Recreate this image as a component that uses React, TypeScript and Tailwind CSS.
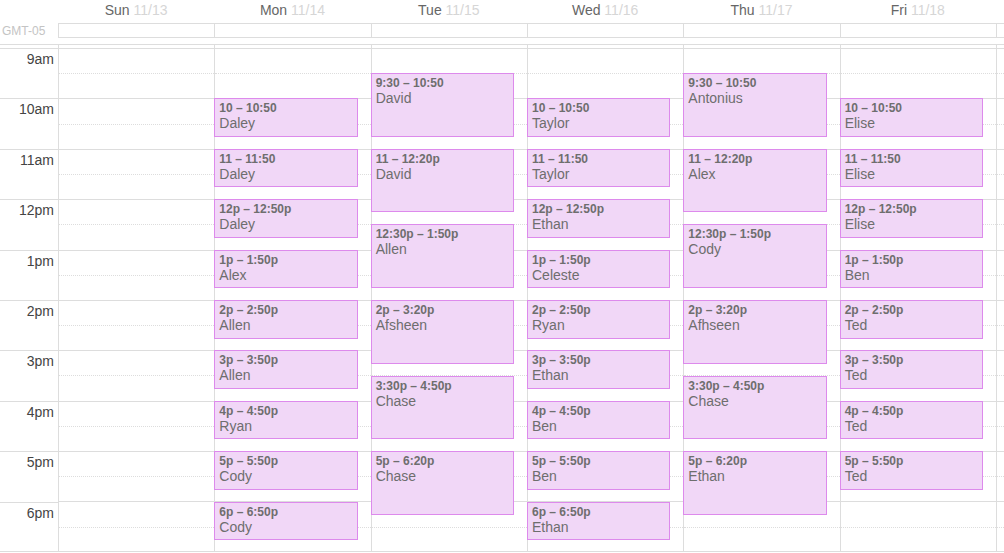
import React from "react";

type CalEvent = { start: number; end: number; time: string; who: string };

const DAYS = [
  { name: "Sun", date: "11/13" },
  { name: "Mon", date: "11/14" },
  { name: "Tue", date: "11/15" },
  { name: "Wed", date: "11/16" },
  { name: "Thu", date: "11/17" },
  { name: "Fri", date: "11/18" },
  { name: "", date: "" },
];

const HOURS = ["9am", "10am", "11am", "12pm", "1pm", "2pm", "3pm", "4pm", "5pm", "6pm"];

// minutes from midnight
const m = (h: number, min = 0) => h * 60 + min;

const ev = (s: number, e: number, time: string, who: string): CalEvent => ({
  start: s,
  end: e,
  time,
  who,
});

const EVENTS: CalEvent[][] = [
  [],
  [
    ev(m(10), m(10, 50), "10 – 10:50", "Daley"),
    ev(m(11), m(11, 50), "11 – 11:50", "Daley"),
    ev(m(12), m(12, 50), "12p – 12:50p", "Daley"),
    ev(m(13), m(13, 50), "1p – 1:50p", "Alex"),
    ev(m(14), m(14, 50), "2p – 2:50p", "Allen"),
    ev(m(15), m(15, 50), "3p – 3:50p", "Allen"),
    ev(m(16), m(16, 50), "4p – 4:50p", "Ryan"),
    ev(m(17), m(17, 50), "5p – 5:50p", "Cody"),
    ev(m(18), m(18, 50), "6p – 6:50p", "Cody"),
  ],
  [
    ev(m(9, 30), m(10, 50), "9:30 – 10:50", "David"),
    ev(m(11), m(12, 20), "11 – 12:20p", "David"),
    ev(m(12, 30), m(13, 50), "12:30p – 1:50p", "Allen"),
    ev(m(14), m(15, 20), "2p – 3:20p", "Afsheen"),
    ev(m(15, 30), m(16, 50), "3:30p – 4:50p", "Chase"),
    ev(m(17), m(18, 20), "5p – 6:20p", "Chase"),
  ],
  [
    ev(m(10), m(10, 50), "10 – 10:50", "Taylor"),
    ev(m(11), m(11, 50), "11 – 11:50", "Taylor"),
    ev(m(12), m(12, 50), "12p – 12:50p", "Ethan"),
    ev(m(13), m(13, 50), "1p – 1:50p", "Celeste"),
    ev(m(14), m(14, 50), "2p – 2:50p", "Ryan"),
    ev(m(15), m(15, 50), "3p – 3:50p", "Ethan"),
    ev(m(16), m(16, 50), "4p – 4:50p", "Ben"),
    ev(m(17), m(17, 50), "5p – 5:50p", "Ben"),
    ev(m(18), m(18, 50), "6p – 6:50p", "Ethan"),
  ],
  [
    ev(m(9, 30), m(10, 50), "9:30 – 10:50", "Antonius"),
    ev(m(11), m(12, 20), "11 – 12:20p", "Alex"),
    ev(m(12, 30), m(13, 50), "12:30p – 1:50p", "Cody"),
    ev(m(14), m(15, 20), "2p – 3:20p", "Afhseen"),
    ev(m(15, 30), m(16, 50), "3:30p – 4:50p", "Chase"),
    ev(m(17), m(18, 20), "5p – 6:20p", "Ethan"),
  ],
  [
    ev(m(10), m(10, 50), "10 – 10:50", "Elise"),
    ev(m(11), m(11, 50), "11 – 11:50", "Elise"),
    ev(m(12), m(12, 50), "12p – 12:50p", "Elise"),
    ev(m(13), m(13, 50), "1p – 1:50p", "Ben"),
    ev(m(14), m(14, 50), "2p – 2:50p", "Ted"),
    ev(m(15), m(15, 50), "3p – 3:50p", "Ted"),
    ev(m(16), m(16, 50), "4p – 4:50p", "Ted"),
    ev(m(17), m(17, 50), "5p – 5:50p", "Ted"),
  ],
  [],
];

const PX_PER_MIN = 50.4 / 60;
const DAY_START = m(9);

const cols = "grid grid-cols-[58px_repeat(7,156.33px)]";

function cn(...parts: (string | false | undefined)[]) {
  return parts.filter(Boolean).join(" ");
}

function EventBox({ e }: { e: CalEvent }) {
  const top = (e.start - DAY_START) * PX_PER_MIN;
  const height = (e.end - e.start) * PX_PER_MIN - 3.5;
  return (
    <div
      className="absolute left-[-1px] right-[13px] z-10 overflow-hidden border border-[#dd8aec] bg-[#f1d7f7] pl-[4px] pr-[2px] pt-[2px] text-[#6e6e6e]"
      style={{ top, height }}
    >
      <div className="whitespace-nowrap text-[12px] font-bold leading-[14px]">{e.time}</div>
      <div className="text-[14px] leading-[17px]">{e.who}</div>
    </div>
  );
}

function DayColumn({ events }: { events: CalEvent[] }) {
  return (
    <div className="relative border-l border-[#ddd]">
      {Array.from({ length: 20 }).map((_, i) => (
        <div
          key={i}
          className={cn(
            "h-[25.2px] border-t border-[#ddd]",
            i % 2 === 1 && "border-dotted",
            i === 19 && "border-b [border-bottom-style:solid]",
          )}
        />
      ))}
      {events.map((e, i) => (
        <EventBox key={i} e={e} />
      ))}
    </div>
  );
}

export default function App() {
  return (
    <div className="h-[553px] w-[1004px] overflow-hidden bg-white font-['Liberation_Sans',Arial,sans-serif] text-[14px] text-[#666]">
      {/* day headings */}
      <div className={cn(cols, "h-[23px]")}>
        <div />
        {DAYS.map((d, i) => (
          <div key={i} className="whitespace-nowrap pt-[2px] text-center leading-[16px]">
            {d.name} <span className="text-[#d6d6d6]">{d.date}</span>
          </div>
        ))}
      </div>

      {/* all-day row */}
      <div className={cn(cols, "h-[15px]")}>
        <div className="pl-[2px] pt-[1px] text-[12px] leading-[14px] text-[#c4c4c4]">GMT-05</div>
        {DAYS.map((_, i) => (
          <div key={i} className="border-y border-l border-[#ddd]" />
        ))}
      </div>

      <div className="h-[6px]" />

      {/* divider */}
      <div className={cn(cols, "h-[4px] border-t border-[#ddd]")}>
        <div />
        {DAYS.map((_, i) => (
          <div key={i} className="border-l border-[#ddd]" />
        ))}
      </div>

      {/* time grid */}
      <div className={cols}>
        <div>
          {HOURS.map((h, i) => (
            <div
              key={h}
              className={cn(
                "h-[50.4px] border-t border-[#ddd] pr-[4px] pt-[2px] text-right leading-[16px] text-[#444]",
                i === HOURS.length - 1 && "border-b",
              )}
            >
              {h}
            </div>
          ))}
        </div>
        {DAYS.map((_, i) => (
          <DayColumn key={i} events={EVENTS[i]} />
        ))}
      </div>
    </div>
  );
}
